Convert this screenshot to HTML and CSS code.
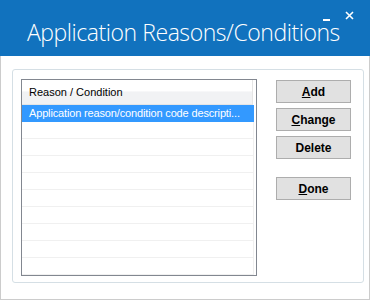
FILE: index.html
```html
<!DOCTYPE html>
<html lang="en">
<head>
    <meta charset="UTF-8">
    <title>Application Reasons/Conditions</title>
    <link rel="stylesheet" href="styles.css">
</head>
<body>
    <div class="window">
        <header class="titlebar">
            <h1 class="title">Application Reasons/Conditions</h1>
            <div class="controls">
                <span class="minimize"></span>
                <svg class="close" width="9" height="9" viewBox="0 0 9 9">
                    <path d="M1 1 L8 8 M8 1 L1 8" stroke="#fff" stroke-width="1.6"/>
                </svg>
            </div>
        </header>
        <main class="content">
            <div class="groupbox">
                <div class="listbox">
                    <div class="list-header"><span>Reason / Condition</span></div>
                    <ul class="rows">
                        <li class="row selected">Application reason/condition code descripti...</li>
                        <li class="row"></li>
                        <li class="row"></li>
                        <li class="row"></li>
                        <li class="row"></li>
                        <li class="row"></li>
                        <li class="row"></li>
                        <li class="row"></li>
                        <li class="row"></li>
                        <li class="row"></li>
                    </ul>
                </div>
                <div class="buttons">
                    <button><u>A</u>dd</button>
                    <button><u>C</u>hange</button>
                    <button>Delete</button>
                    <button class="done"><u>D</u>one</button>
                </div>
            </div>
        </main>
    </div>
</body>
</html>
```

FILE: styles.css
```css
* {
    box-sizing: border-box;
}
body {
    margin: 0;
    font-family: "Liberation Sans", Arial, sans-serif;
    background-color: #fff;
}
.window {
    width: 370px;
    height: 300px;
    border: 1px solid #cccccc;
    border-top: none;
    display: flex;
    flex-direction: column;
    background-color: #fff;
}
.titlebar {
    height: 56px;
    margin: 0 -1px;
    background-color: #1172be;
    position: relative;
    display: flex;
    align-items: flex-start;
}
.title {
    margin: 16px 0 0 27px;
    font-family: "Open Sans", sans-serif;
    font-weight: 300;
    font-size: 23px;
    color: #fff;
    white-space: nowrap;
    letter-spacing: -0.45px;
}
.controls {
    position: absolute;
    top: 11px;
    right: 16px;
    display: flex;
    align-items: flex-start;
    gap: 15px;
}
.minimize {
    width: 7px;
    height: 2px;
    background-color: #fff;
    margin-top: 8px;
}
.content {
    flex: 1;
    padding: 13px 5px 16px 11px;
}
.groupbox {
    height: 214px;
    border: 1px solid #d5dfe5;
    border-radius: 3px;
    padding: 9px 12px 6px 8px;
    display: flex;
    justify-content: space-between;
}
.listbox {
    width: 236px;
    height: 197px;
    border: 1px solid #828790;
    overflow: hidden;
    font-size: 11px;
    color: #000;
}
.list-header {
    height: 25px;
    width: 231px;
    padding: 0 0 0 7px;
    display: flex;
    align-items: center;
    background: linear-gradient(#ffffff 0%, #ffffff 45%, #f1f2f4 50%, #f1f2f4 100%);
    border-bottom: 1px solid #e5e5e5;
    border-right: 1px solid #e5e5e5;
}
.rows {
    list-style: none;
    margin: 0;
    padding: 0;
}
.row {
    height: 17px;
    width: 232px;
    padding-left: 7px;
    line-height: 16px;
    border-bottom: 1px solid #f0f0f0;
    border-right: 1px solid #f0f0f0;
    white-space: nowrap;
    letter-spacing: -0.15px;
}
.row.selected {
    background-color: #3399ff;
    color: #fff;
    border-color: #3399ff;
}
.buttons {
    display: flex;
    flex-direction: column;
    gap: 5px;
    padding-top: 1px;
}
button {
    width: 75px;
    height: 23px;
    border: 1px solid #adadad;
    background-color: #e1e1e1;
    font-family: "Liberation Sans", Arial, sans-serif;
    font-size: 12px;
    font-weight: bold;
    color: #000;
    padding: 0;
}
button.done {
    margin-top: 13px;
}
```
